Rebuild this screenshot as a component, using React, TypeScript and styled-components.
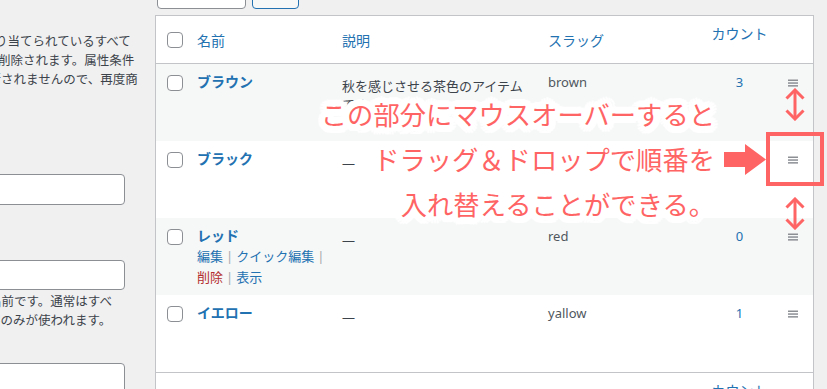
import React from 'react';
import styled, { createGlobalStyle } from 'styled-components';

const GlobalStyle = createGlobalStyle`
  html, body {
    margin: 0;
    padding: 0;
    overflow: hidden;
    background: #f0f0f1;
  }
  body {
    font-family: "Noto Sans", "Noto Sans CJK JP", sans-serif;
    color: #3c434a;
  }
`;

const COLS = '41px 145px 206px 158px 67px 40px';
const PINK = '#ff6464';

// white halo round the callout text, like a thick sticker outline
const halo = (() => {
  const parts: string[] = [];
  [7, 4].forEach((r) => {
    for (let i = 0; i < 16; i++) {
      const a = (i / 16) * Math.PI * 2;
      parts.push(`${(Math.cos(a) * r).toFixed(1)}px ${(Math.sin(a) * r).toFixed(1)}px 1px #fff`);
    }
  });
  return parts.join(', ');
})();

const Page = styled.div`
  display: flex;
  width: 827px;
  height: 389px;
  overflow: hidden;
`;

const LeftCol = styled.div`
  width: 155px;
  flex: none;
  overflow: hidden;
  padding-top: 32px;
  box-sizing: border-box;
`;

const HelpLine = styled.div<{ $shift: number }>`
  white-space: nowrap;
  margin-left: ${(p) => p.$shift}px;
  font-size: 12.5px;
  line-height: 19px;
  color: #3c434a;
`;

const HelpBlock = styled.div<{ $top: number }>`
  margin-top: ${(p) => p.$top}px;
`;

const FieldBox = styled.div<{ $top: number; $h: number }>`
  margin-top: ${(p) => p.$top}px;
  margin-left: -20px;
  width: 145px;
  height: ${(p) => p.$h}px;
  box-sizing: border-box;
  background: #fff;
  border: 1px solid #8c8f94;
  border-radius: 4px;
`;

const MainCol = styled.div`
  position: relative;
  width: 659px;
  flex: none;
`;

const TopActions = styled.div`
  display: flex;
  gap: 6px;
  margin-top: -21px;
  margin-left: 2px;
  height: 30px;
`;

const ActionButton = styled.div<{ $w: number; $primary?: boolean }>`
  width: ${(p) => p.$w}px;
  height: 30px;
  box-sizing: border-box;
  border-radius: 4px;
  border: 1px solid ${(p) => (p.$primary ? '#2271b1' : '#8c8f94')};
  background: ${(p) => (p.$primary ? '#f6f7f7' : '#fff')};
`;

const Table = styled.div`
  margin-top: 6px;
  border: 1px solid #c3c4c7;
  background: #fff;
`;

const HeadRow = styled.div<{ $foot?: boolean }>`
  display: grid;
  grid-template-columns: ${COLS};
  height: 47px;
  align-items: center;
  border-${(p) => (p.$foot ? 'top' : 'bottom')}: 1px solid #c3c4c7;
  font-size: 14px;
  color: #2271b1;
`;

const HeadCell = styled.div<{ $center?: boolean; $raise?: number }>`
  text-align: ${(p) => (p.$center ? 'center' : 'left')};
  padding-bottom: ${(p) => (p.$raise ? p.$raise : 0)}px;
  white-space: nowrap;
`;

const Row = styled.div<{ $alt: boolean }>`
  display: grid;
  grid-template-columns: ${COLS};
  height: 77px;
  align-items: start;
  background: ${(p) => (p.$alt ? '#f6f7f7' : '#fff')};
`;

const Cell = styled.div<{ $top: number; $center?: boolean }>`
  padding-top: ${(p) => p.$top}px;
  text-align: ${(p) => (p.$center ? 'center' : 'left')};
  font-size: 13px;
  line-height: 18px;
`;

const CheckCell = styled.div<{ $top?: number }>`
  padding-left: 11px;
  padding-top: ${(p) => p.$top ?? 0}px;
`;

const Check = styled.span`
  display: block;
  width: 16px;
  height: 16px;
  box-sizing: border-box;
  border: 1px solid #8c8f94;
  border-radius: 4px;
  background: #fff;
`;

const NameLink = styled.div`
  font-size: 14px;
  font-weight: 700;
  line-height: 20px;
  color: #2271b1;
`;

const RowActions = styled.div`
  font-size: 13px;
  line-height: 21px;
  color: #2271b1;
  white-space: nowrap;
`;

const Sep = styled.span`
  color: #a7aaad;
  margin: 0 3px;
`;

const Danger = styled.span`
  color: #b32d2e;
`;

const Desc = styled.div`
  padding-right: 20px;
  color: #3c434a;
`;

const Slug = styled.span`
  color: #50575e;
`;

const CountLink = styled.span`
  color: #2271b1;
`;

const HandleCell = styled.div`
  display: flex;
  justify-content: center;
  padding-top: 15px;
`;

const Callout = styled.div`
  position: absolute;
  left: 0;
  top: 91px;
  width: 560px;
  text-align: right;
  font-family: "Noto Sans CJK JP", sans-serif;
  font-size: 26.3px;
  line-height: 45px;
  color: ${PINK};
  text-shadow: ${halo};
  white-space: nowrap;
  pointer-events: none;
`;

const HighlightBox = styled.div`
  position: absolute;
  left: 611px;
  top: 132px;
  width: 58px;
  height: 54px;
  box-sizing: border-box;
  border: 4px solid ${PINK};
`;

const Marker = styled.svg<{ $x: number; $y: number }>`
  position: absolute;
  left: ${(p) => p.$x}px;
  top: ${(p) => p.$y}px;
`;

const HandleIcon = () => (
  <svg width="10" height="8" viewBox="0 0 10 8">
    <rect x="0" y="0.5" width="10" height="1.5" fill="#8c8f94" />
    <rect x="0" y="3.3" width="10" height="1.5" fill="#8c8f94" />
    <rect x="0" y="6.1" width="10" height="1.5" fill="#8c8f94" />
  </svg>
);

const UpDown = ({ x, y }: { x: number; y: number }) => (
  <Marker $x={x} $y={y} width="20" height="33" viewBox="0 0 20 33">
    <g fill="none" stroke={PINK} strokeWidth="3">
      <path d="M10 2 V31" />
      <path d="M1.5 10.5 L10 2 L18.5 10.5" />
      <path d="M1.5 22.5 L10 31 L18.5 22.5" />
    </g>
  </Marker>
);

type Term = {
  name: string;
  desc: string;
  slug: string;
  count: string;
  actions?: boolean;
};

const terms: Term[] = [
  { name: 'ブラウン', desc: '秋を感じさせる茶色のアイテムです。', slug: 'brown', count: '3' },
  { name: 'ブラック', desc: '—', slug: '', count: '' },
  { name: 'レッド', desc: '—', slug: 'red', count: '0', actions: true },
  { name: 'イエロー', desc: '—', slug: 'yallow', count: '1' },
];

const Header = ({ foot }: { foot?: boolean }) => (
  <HeadRow $foot={foot}>
    <CheckCell>
      <Check />
    </CheckCell>
    <HeadCell>名前</HeadCell>
    <HeadCell>説明</HeadCell>
    <HeadCell>スラッグ</HeadCell>
    <HeadCell $center $raise={14}>
      カウント
    </HeadCell>
    <HeadCell />
  </HeadRow>
);

export default function App() {
  return (
    <>
      <GlobalStyle />
      <Page>
        <LeftCol>
          <HelpLine $shift={-30}>が割り当てられているすべて</HelpLine>
          <HelpLine $shift={-27}>から削除されます。属性条件</HelpLine>
          <HelpLine $shift={-24}>更新されませんので、再度商</HelpLine>
          <FieldBox $top={85} $h={31} />
          <FieldBox $top={55} $h={30} />
          <HelpBlock $top={2}>
            <HelpLine $shift={-11}>名前です。通常はすべ</HelpLine>
            <HelpLine $shift={-12}>字のみが使われます。</HelpLine>
          </HelpBlock>
          <FieldBox $top={33} $h={31} />
        </LeftCol>

        <MainCol>
          <TopActions>
            <ActionButton $w={89} />
            <ActionButton $w={47} $primary />
          </TopActions>
          <Table>
            <Header />
            {terms.map((t, i) => (
              <Row key={t.name} $alt={i % 2 === 0}>
                <CheckCell $top={11}>
                  <Check />
                </CheckCell>
                <Cell $top={8}>
                  <NameLink>{t.name}</NameLink>
                  {t.actions && (
                    <RowActions>
                      編集<Sep>|</Sep>クイック編集<Sep>|</Sep>
                      <br />
                      <Danger>削除</Danger>
                      <Sep>|</Sep>表示
                    </RowActions>
                  )}
                </Cell>
                <Cell $top={13}>
                  <Desc>{t.desc}</Desc>
                </Cell>
                <Cell $top={9}>
                  <Slug>{t.slug}</Slug>
                </Cell>
                <Cell $top={9} $center>
                  <CountLink>{t.count}</CountLink>
                </Cell>
                <HandleCell>
                  <HandleIcon />
                </HandleCell>
              </Row>
            ))}
            <Header foot />
          </Table>

          <Callout>
            この部分にマウスオーバーすると
            <br />
            ドラッグ＆ドロップで順番を
            <br />
            入れ替えることができる。
          </Callout>
          <HighlightBox />
          <Marker $x={569} $y={144} width="42" height="31" viewBox="0 0 42 31">
            <polygon points="0,8 21,8 21,0 42,15.5 21,31 21,23 0,23" fill={PINK} />
          </Marker>
          <UpDown x={630} y={88} />
          <UpDown x={630} y={197} />
        </MainCol>
      </Page>
    </>
  );
}
